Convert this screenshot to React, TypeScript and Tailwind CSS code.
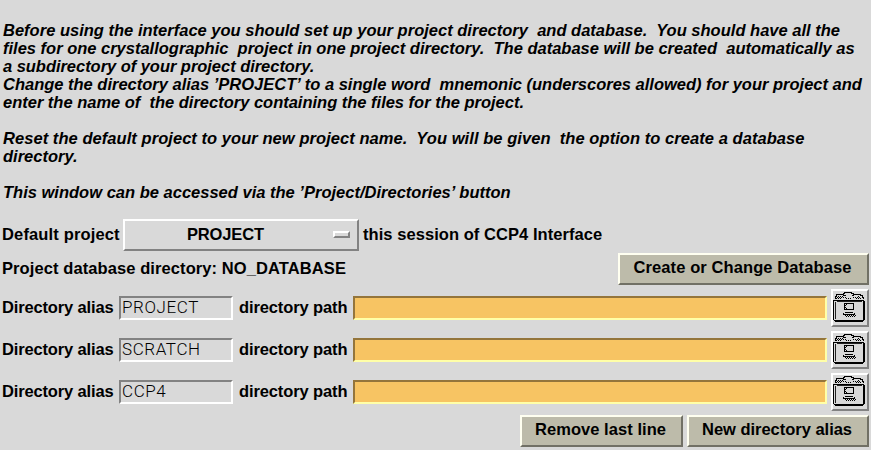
const intro: { text: string; spacing: string }[] = [
  { text: "Before using the interface you should set up your project directory  and database.  You should have all the", spacing: "tracking-[0.008px]" },
  { text: "files for one crystallographic  project in one project directory.  The database will be created  automatically as", spacing: "tracking-[-0.005px]" },
  { text: "a subdirectory of your project directory.", spacing: "tracking-[-0.04px]" },
  { text: "Change the directory alias ’PROJECT’ to a single word  mnemonic (underscores allowed) for your project and", spacing: "tracking-[-0.005px]" },
  { text: "enter the name of  the directory containing the files for the project.", spacing: "tracking-[-0.01px]" },
  { text: "", spacing: "" },
  { text: "Reset the default project to your new project name.  You will be given  the option to create a database", spacing: "tracking-[0.055px]" },
  { text: "directory.", spacing: "tracking-[0px]" },
  { text: "", spacing: "" },
  { text: "This window can be accessed via the ’Project/Directories’ button", spacing: "tracking-[0.005px]" },
];

const aliases = ["PROJECT", "SCRATCH", "CCP4"];

const raised = "border-2 border-t-[#fffff0] border-l-[#fffff0] border-r-[#717065] border-b-[#717065] bg-[#bdbbaa]";

function CabinetIcon() {
  return (
    <svg width="34" height="34" viewBox="2 2 34 34" shapeRendering="crispEdges" fill="none" stroke="#000">
      <defs>
        <pattern id="dither" width="2" height="2" patternUnits="userSpaceOnUse">
          <rect width="1" height="1" fill="#000" stroke="none" />
          <rect x="1" y="1" width="1" height="1" fill="#000" stroke="none" />
        </pattern>
      </defs>
      <path d="M4.500 10V7.5H5.5V5.5H12V4.5H13V3.5H20V4.5H22V5.5H29V6.5H31V8.5H32.500V10" />
      <path d="M5 8h2v-1h5v1h3v1h6v-1h5v-1h3v2h2v1H24v-1h-3v1h-7v-1h-4v1H5z" fill="url(#dither)" stroke="none" />
      <path d="M12 6.5h3M21 6.5h2" />
      <path d="M2.5 31V11.5H33" />
      <path d="M4.5 30V13M6 12.5H31" strokeOpacity="0.85" />
      <path d="M32 12h2v19h-1v1h-1v1H4v-1h-1v-1h29z" fill="#000" stroke="none" />
      <path d="M13.5 14.5h9v6h-9z" />
      <path d="M14 15h3v1h-1v1h-1v1h1v1h1v1h-3z" fill="url(#dither)" stroke="none" />
      <path d="M12.5 24v1.500h2M14 25.500h9M23.500 26v-2M14 23.5h8" />
      <path d="M13 26h12v1h-1v1h-9v-1h-2z" fill="url(#dither)" stroke="none" />
    </svg>
  );
}

function AliasRow({ name }: { name: string }) {
  return (
    <div className="flex h-[38px] items-center">
      <span className="w-[117px] pb-0.5 tracking-[-0.15px]">Directory alias</span>
      <div className="h-6 w-[114px] border-2 border-t-[#828282] border-l-[#828282] border-r-white border-b-white pl-px font-['Roboto',sans-serif] text-[17px] leading-[19px] font-light tracking-[0.6px]">
        {name}
      </div>
      <span className="ml-1.5 w-[114px] pb-0.5 tracking-[-0.12px]">directory path</span>
      <div className="h-6 w-[474px] border-2 border-t-[#94753b] border-l-[#94753b] border-r-[#ffffa8] border-b-[#ffffa8] bg-[#f7c463]" />
      <button className="ml-1 size-[38px] border-2 border-t-white border-l-white border-r-[#828282] border-b-[#828282]">
        <CabinetIcon />
      </button>
    </div>
  );
}

export default function App() {
  return (
    <main className="h-[450px] w-[871px] overflow-hidden bg-[#d9d9d9] pt-[21px] pl-0.5 font-['Liberation_Sans',Arial,sans-serif] text-[16.5px] leading-[18px] font-bold whitespace-pre text-black">
      <div className="h-[198px] pl-px italic">
        {intro.map((line, i) => (
          <p key={i} className={`h-[18px] ${line.spacing}`}>{line.text}</p>
        ))}
      </div>
      <div className="flex h-8 items-center">
        <span className="w-[121px] pb-0.5 tracking-[0.15px]">Default project</span>
        <button className="flex h-8 w-[236px] items-center border-2 border-t-white border-l-white border-r-[#828282] border-b-[#828282] pl-[62px]">
          <span className="w-[146px] pb-0.5 text-left tracking-[-0.15px]">PROJECT</span>
          <span className="mb-px h-[7px] w-[17px] border-2 border-t-white border-l-white border-r-[#828282] border-b-[#828282]" />
        </button>
        <span className="ml-1 pb-0.5 tracking-[0.06px]">this session of CCP4 Interface</span>
      </div>
      <div className="mt-0.5 mb-1 flex h-8 items-center">
        <span className="w-[616px] pb-0.5 tracking-[0.09px]">Project database directory: NO_DATABASE</span>
        <button className={`h-8 w-[251px] pr-0.5 pb-1 tracking-[0.1px] ${raised}`}>Create or Change Database</button>
      </div>
      <div className="flex flex-col gap-1">
        {aliases.map((name) => <AliasRow key={name} name={name} />)}
      </div>
      <div className="mt-1 flex gap-1 pl-[518px]">
        <button className={`h-8 w-[163px] pr-0.5 pb-1 tracking-[0.05px] ${raised}`}>Remove last line</button>
        <button className={`h-8 w-[182px] pr-0.5 pb-1 tracking-[-0.02px] ${raised}`}>New directory alias</button>
      </div>
    </main>
  );
}
